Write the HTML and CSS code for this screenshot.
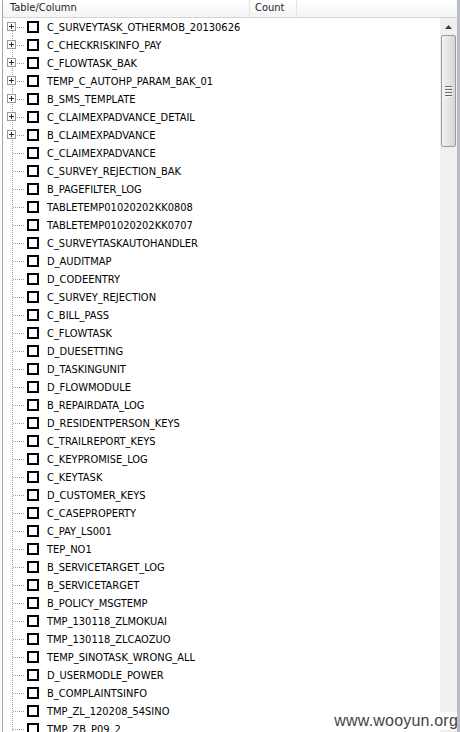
FILE: index.html
```html
<!DOCTYPE html>
<html>
<head>
<meta charset="utf-8">
<link rel="stylesheet" href="styles.css">
</head>
<body>
<div class="panel">
  <div class="header">
    <div class="col col-name">Table/Column</div>
    <div class="col col-count">Count</div>
    <div class="col col-rest"></div>
  </div>
  <div class="content">
    <div class="tree">
      <div class="row first"><span class="conn"><span class="plus"></span></span><span class="chk"></span><span class="label">C_SURVEYTASK_OTHERMOB_20130626</span></div>
      <div class="row"><span class="conn"><span class="plus"></span></span><span class="chk"></span><span class="label">C_CHECKRISKINFO_PAY</span></div>
      <div class="row"><span class="conn"><span class="plus"></span></span><span class="chk"></span><span class="label">C_FLOWTASK_BAK</span></div>
      <div class="row"><span class="conn"><span class="plus"></span></span><span class="chk"></span><span class="label">TEMP_C_AUTOHP_PARAM_BAK_01</span></div>
      <div class="row"><span class="conn"><span class="plus"></span></span><span class="chk"></span><span class="label">B_SMS_TEMPLATE</span></div>
      <div class="row"><span class="conn"><span class="plus"></span></span><span class="chk"></span><span class="label">C_CLAIMEXPADVANCE_DETAIL</span></div>
      <div class="row"><span class="conn"><span class="plus"></span></span><span class="chk"></span><span class="label">B_CLAIMEXPADVANCE</span></div>
      <div class="row"><span class="conn"></span><span class="chk"></span><span class="label">C_CLAIMEXPADVANCE</span></div>
      <div class="row"><span class="conn"></span><span class="chk"></span><span class="label">C_SURVEY_REJECTION_BAK</span></div>
      <div class="row"><span class="conn"></span><span class="chk"></span><span class="label">B_PAGEFILTER_LOG</span></div>
      <div class="row"><span class="conn"></span><span class="chk"></span><span class="label">TABLETEMP01020202KK0808</span></div>
      <div class="row"><span class="conn"></span><span class="chk"></span><span class="label">TABLETEMP01020202KK0707</span></div>
      <div class="row"><span class="conn"></span><span class="chk"></span><span class="label">C_SURVEYTASKAUTOHANDLER</span></div>
      <div class="row"><span class="conn"></span><span class="chk"></span><span class="label">D_AUDITMAP</span></div>
      <div class="row"><span class="conn"></span><span class="chk"></span><span class="label">D_CODEENTRY</span></div>
      <div class="row"><span class="conn"></span><span class="chk"></span><span class="label">C_SURVEY_REJECTION</span></div>
      <div class="row"><span class="conn"></span><span class="chk"></span><span class="label">C_BILL_PASS</span></div>
      <div class="row"><span class="conn"></span><span class="chk"></span><span class="label">C_FLOWTASK</span></div>
      <div class="row"><span class="conn"></span><span class="chk"></span><span class="label">D_DUESETTING</span></div>
      <div class="row"><span class="conn"></span><span class="chk"></span><span class="label">D_TASKINGUNIT</span></div>
      <div class="row"><span class="conn"></span><span class="chk"></span><span class="label">D_FLOWMODULE</span></div>
      <div class="row"><span class="conn"></span><span class="chk"></span><span class="label">B_REPAIRDATA_LOG</span></div>
      <div class="row"><span class="conn"></span><span class="chk"></span><span class="label">D_RESIDENTPERSON_KEYS</span></div>
      <div class="row"><span class="conn"></span><span class="chk"></span><span class="label">C_TRAILREPORT_KEYS</span></div>
      <div class="row"><span class="conn"></span><span class="chk"></span><span class="label">C_KEYPROMISE_LOG</span></div>
      <div class="row"><span class="conn"></span><span class="chk"></span><span class="label">C_KEYTASK</span></div>
      <div class="row"><span class="conn"></span><span class="chk"></span><span class="label">D_CUSTOMER_KEYS</span></div>
      <div class="row"><span class="conn"></span><span class="chk"></span><span class="label">C_CASEPROPERTY</span></div>
      <div class="row"><span class="conn"></span><span class="chk"></span><span class="label">C_PAY_LS001</span></div>
      <div class="row"><span class="conn"></span><span class="chk"></span><span class="label">TEP_NO1</span></div>
      <div class="row"><span class="conn"></span><span class="chk"></span><span class="label">B_SERVICETARGET_LOG</span></div>
      <div class="row"><span class="conn"></span><span class="chk"></span><span class="label">B_SERVICETARGET</span></div>
      <div class="row"><span class="conn"></span><span class="chk"></span><span class="label">B_POLICY_MSGTEMP</span></div>
      <div class="row"><span class="conn"></span><span class="chk"></span><span class="label">TMP_130118_ZLMOKUAI</span></div>
      <div class="row"><span class="conn"></span><span class="chk"></span><span class="label">TMP_130118_ZLCAOZUO</span></div>
      <div class="row"><span class="conn"></span><span class="chk"></span><span class="label">TEMP_SINOTASK_WRONG_ALL</span></div>
      <div class="row"><span class="conn"></span><span class="chk"></span><span class="label">D_USERMODLE_POWER</span></div>
      <div class="row"><span class="conn"></span><span class="chk"></span><span class="label">B_COMPLAINTSINFO</span></div>
      <div class="row"><span class="conn"></span><span class="chk"></span><span class="label">TMP_ZL_120208_54SINO</span></div>
      <div class="row"><span class="conn"></span><span class="chk"></span><span class="label">TMP_ZB_P09_2</span></div>
    </div>
    <div class="scrollbar">
      <div class="sb-btn"><svg width="7" height="4" viewBox="0 0 7 4"><path d="M0 4 L3.5 0 L7 4 Z" fill="#404040"/></svg></div>
      <div class="sb-thumb"><span class="grip"></span><span class="grip"></span><span class="grip"></span><span class="grip"></span></div>
      <div class="sb-track"></div>
    </div>
  </div>
  <div class="watermark">www.wooyun.org</div>
</div>
</body>
</html>
```

FILE: styles.css
```css
html, body {
  margin: 0;
  padding: 0;
  background: #ffffff;
}
body {
  width: 460px;
  height: 732px;
  overflow: hidden;
  font-family: "DejaVu Sans Condensed", "DejaVu Sans", sans-serif;
}
.panel {
  position: relative;
  width: 460px;
  height: 732px;
  box-sizing: border-box;
  padding-left: 2px;
  display: flex;
  flex-direction: column;
  background: #fff;
}
.panel::before {
  content: "";
  position: absolute;
  left: 2px;
  top: 0;
  bottom: 0;
  width: 1px;
  background: #a5a5a5;
}
.panel::after {
  content: "";
  position: absolute;
  right: 0;
  top: 0;
  bottom: 0;
  width: 3px;
  background: #b9bcc6;
}
.header {
  height: 17px;
  display: flex;
  background: linear-gradient(#ffffff, #f3f4f6);
  border-bottom: 1px solid #d5d5d5;
  flex: none;
}
.col {
  font-size: 11px;
  color: #1e1e1e;
  line-height: 16px;
  box-sizing: border-box;
  border-right: 1px solid #e3e3e3;
}
.col-name {
  width: 248px;
  padding-left: 8px;
}
.col-count {
  width: 47px;
  padding-left: 5px;
}
.col-rest {
  flex: 1;
  border-right: none;
}
.content {
  flex: 1;
  display: flex;
  min-height: 0;
}
.tree {
  flex: 1;
  overflow: hidden;
}
.row {
  height: 18px;
  display: flex;
  align-items: center;
  position: relative;
}
.conn {
  width: 24px;
  height: 18px;
  flex: none;
  position: relative;
  background:
    repeating-linear-gradient(to bottom, #a0a0a0 0 1px, transparent 1px 2px) 10px 0 / 1px 18px no-repeat,
    repeating-linear-gradient(to right, #a0a0a0 0 1px, transparent 1px 2px) 11px 9px / 12px 1px no-repeat;
}
.first .conn {
  background:
    repeating-linear-gradient(to bottom, #a0a0a0 0 1px, transparent 1px 2px) 10px 9px / 1px 9px no-repeat,
    repeating-linear-gradient(to right, #a0a0a0 0 1px, transparent 1px 2px) 11px 9px / 12px 1px no-repeat;
}
.plus {
  position: absolute;
  left: 5px;
  top: 4px;
  width: 9px;
  height: 9px;
  box-sizing: border-box;
  border: 1px solid #999;
  background:
    linear-gradient(#2e2e2e, #2e2e2e) 1px 3px / 5px 1px no-repeat,
    linear-gradient(#2e2e2e, #2e2e2e) 3px 1px / 1px 5px no-repeat,
    #fff;
}
.chk {
  width: 12px;
  height: 12px;
  box-sizing: border-box;
  border: 2px solid #000;
  flex: none;
  margin-left: 1px;
  background: #fff;
}
.label {
  margin-left: 8px;
  font-size: 11px;
  color: #000;
  white-space: nowrap;
}
.scrollbar {
  width: 17px;
  flex: none;
  margin-right: 3px;
  background: #f0f0f0;
  display: flex;
  flex-direction: column;
}
.sb-btn {
  height: 17px;
  display: flex;
  align-items: center;
  justify-content: center;
  background: #f0f0f0;
}
.sb-thumb {
  height: 112px;
  margin: 0 1px;
  box-sizing: border-box;
  border: 1px solid #9b9b9b;
  border-radius: 2px;
  background: linear-gradient(to right, #f2f2f2, #e5e5e5 50%, #d6d6d6);
  display: flex;
  flex-direction: column;
  align-items: center;
  justify-content: center;
  gap: 1px;
}
.grip {
  width: 7px;
  height: 1px;
  background: #6c6c6c;
  border-bottom: 1px solid #f8f8f8;
}
.sb-track {
  flex: 1;
}
.watermark {
  position: absolute;
  right: 0;
  bottom: 2px;
  font-family: "Liberation Sans", sans-serif;
  font-size: 16px;
  color: #444;
  background: rgba(255,255,255,0.85);
  padding: 0 2px 0 4px;
  letter-spacing: 0.2px;
}
```
